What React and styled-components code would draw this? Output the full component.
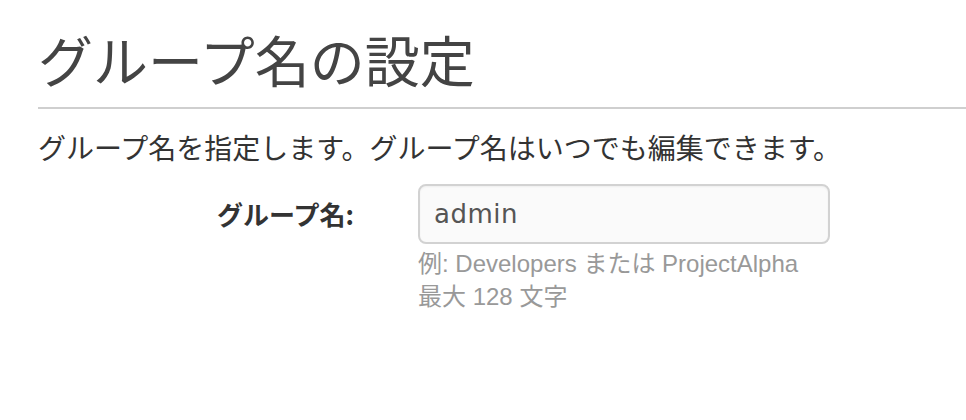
import React from "react";
import styled, { createGlobalStyle } from "styled-components";

const Global = createGlobalStyle`
  html, body { margin: 0; padding: 0; background: #fff; }
  body {
    font-family: "Liberation Sans", "Noto Sans CJK JP", sans-serif;
    color: #333;
  }
`;

const Page = styled.div`
  padding: 0 0 0 38px;
  width: 928px;
`;

const Title = styled.h1`
  margin: 0;
  padding-top: 24px;
  font-family: "Noto Sans CJK JP", sans-serif;
  font-weight: 400;
  font-size: 55px;
  line-height: 68px;
  color: #444;
  padding-bottom: 15px;
  border-bottom: 2px solid #cfcfcf;
`;

const Lead = styled.p`
  margin: 0;
  padding-top: 18px;
  font-family: "Noto Sans CJK JP", sans-serif;
  font-size: 28px;
  line-height: 40px;
  color: #333;
`;

const FormRow = styled.div`
  display: grid;
  grid-template-columns: 316px 412px;
  column-gap: 64px;
  margin-top: 17px;
  align-items: start;
`;

const Label = styled.label`
  text-align: right;
  font-family: "Noto Sans CJK JP", sans-serif;
  font-weight: 700;
  font-size: 26px;
  line-height: 60px;
  color: #333;
`;

const Controls = styled.div`
  display: flex;
  flex-direction: column;
`;

const Input = styled.input`
  box-sizing: border-box;
  width: 412px;
  height: 60px;
  padding: 0 14px;
  border: 2px solid #d2d2d2;
  border-radius: 8px;
  background: #fafafa;
  box-shadow: inset 0 1px 2px rgba(0, 0, 0, 0.05);
  font-family: "DejaVu Sans", sans-serif;
  font-size: 26px;
  letter-spacing: 0.5px;
  color: #555;
  outline: none;
`;

const Help = styled.div`
  margin-top: 3px;
  font-family: "Liberation Sans", "Noto Sans CJK JP", sans-serif;
  font-size: 24px;
  line-height: 33px;
  color: #999;
`;

export default function App() {
  return (
    <>
      <Global />
      <Page>
        <Title>グループ名の設定</Title>
        <Lead>グループ名を指定します。グループ名はいつでも編集できます。</Lead>
        <FormRow>
          <Label htmlFor="groupname">グループ名:</Label>
          <Controls>
            <Input id="groupname" defaultValue="admin" />
            <Help>
              例: Developers または ProjectAlpha
              <br />
              最大 128 文字
            </Help>
          </Controls>
        </FormRow>
      </Page>
    </>
  );
}
